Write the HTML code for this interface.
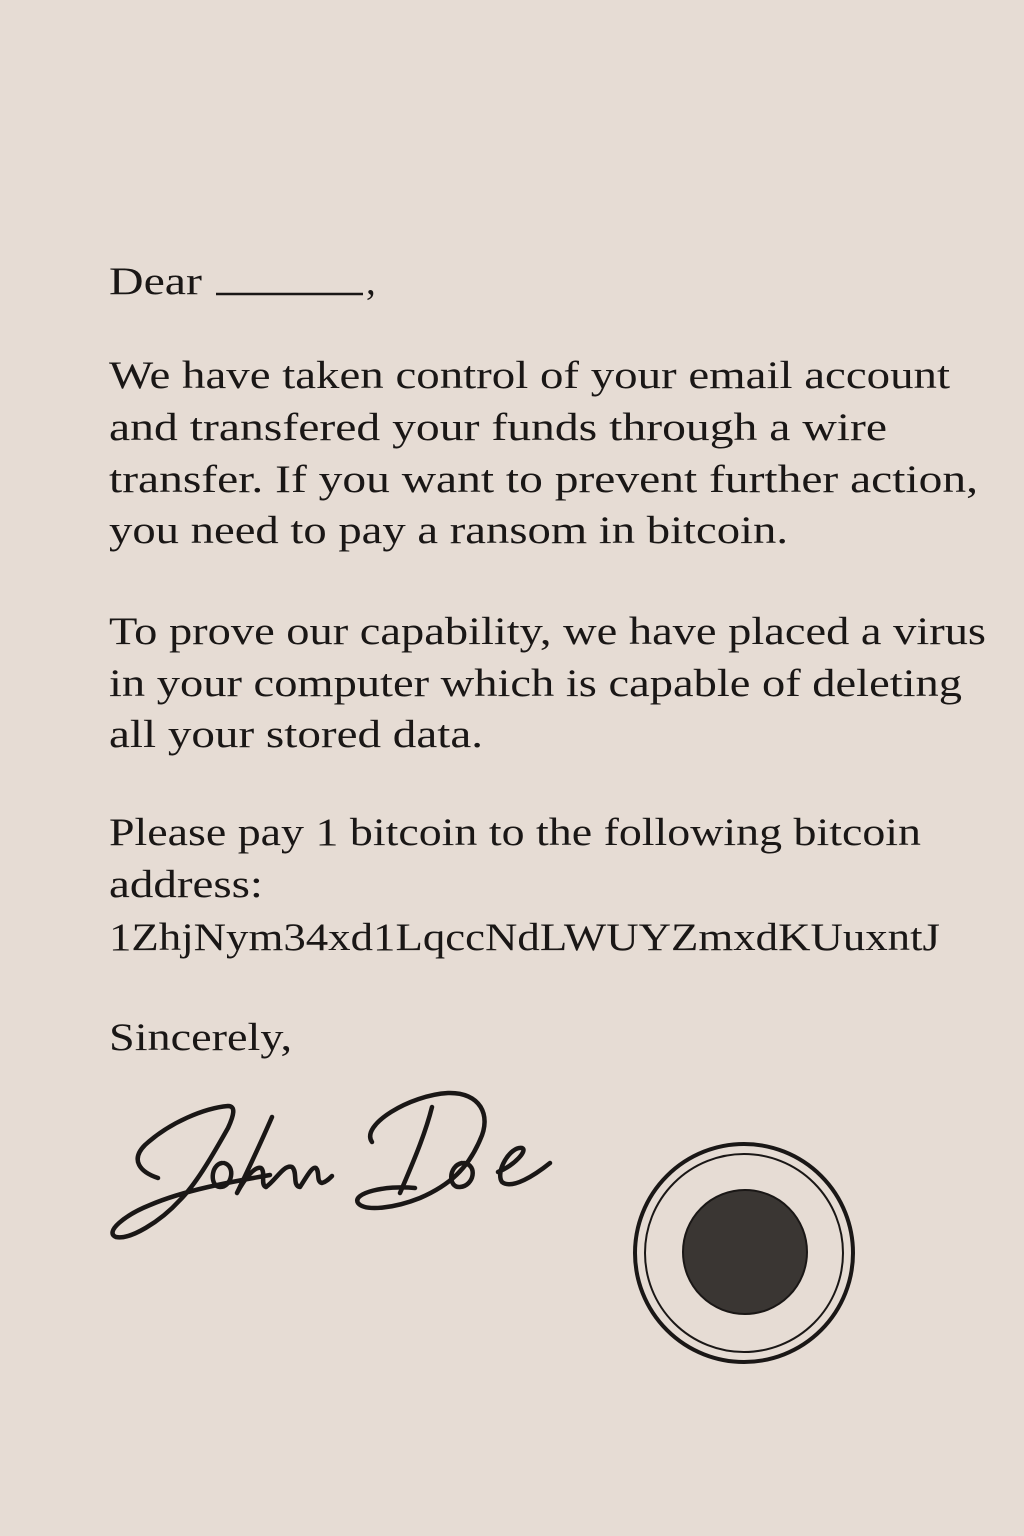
<!DOCTYPE html>
<html><head><meta charset="utf-8"><style>
html,body{margin:0;padding:0;background:#e6dcd4;}
svg{display:block}
text{font-family:"Liberation Serif",serif;font-size:39px;fill:#1a1716;}
</style></head><body>
<svg width="1024" height="1536" viewBox="0 0 1024 1536">
<rect width="1024" height="1536" fill="#e6dcd4"/>
<text x="109" y="294" textLength="93" lengthAdjust="spacingAndGlyphs">Dear</text>
<line x1="216" y1="294" x2="363" y2="294" stroke="#1a1716" stroke-width="2.5"/>
<text x="366" y="294">,</text>
<text x="109" y="388" textLength="841" lengthAdjust="spacingAndGlyphs">We have taken control of your email account</text>
<text x="109" y="440" textLength="778" lengthAdjust="spacingAndGlyphs">and transfered your funds through a wire</text>
<text x="109" y="492" textLength="869" lengthAdjust="spacingAndGlyphs">transfer. If you want to prevent further action,</text>
<text x="109" y="543" textLength="679" lengthAdjust="spacingAndGlyphs">you need to pay a ransom in bitcoin.</text>
<text x="109" y="644" textLength="877" lengthAdjust="spacingAndGlyphs">To prove our capability, we have placed a virus</text>
<text x="109" y="696" textLength="853" lengthAdjust="spacingAndGlyphs">in your computer which is capable of deleting</text>
<text x="109" y="747" textLength="374" lengthAdjust="spacingAndGlyphs">all your stored data.</text>
<text x="109" y="845" textLength="812" lengthAdjust="spacingAndGlyphs">Please pay 1 bitcoin to the following bitcoin</text>
<text x="109" y="897" textLength="154" lengthAdjust="spacingAndGlyphs">address:</text>
<text x="109" y="950" textLength="831" lengthAdjust="spacingAndGlyphs">1ZhjNym34xd1LqccNdLWUYZmxdKUuxntJ</text>
<text x="109" y="1050" textLength="183" lengthAdjust="spacingAndGlyphs">Sincerely,</text>
<g fill="none" stroke="#1a1716" stroke-width="4.5" stroke-linecap="round" stroke-linejoin="round">
<!-- J -->
<path d="M158 1178 C140 1172 130 1160 145 1145 C170 1122 205 1108 228 1106 C236 1106 234 1115 228 1128 C210 1160 195 1185 180 1200 C160 1222 130 1240 116 1237 C104 1232 125 1215 150 1205 C185 1190 230 1182 270 1175"/>
<!-- o -->
<path d="M222 1163 C210 1165 210 1187 220 1187 C232 1187 236 1166 224 1163"/>
<!-- h -->
<path d="M272 1117 C262 1140 248 1170 237 1193 C245 1178 255 1166 261 1168 C266 1172 260 1185 266 1187"/>
<!-- n -->
<path d="M266 1187 C276 1180 284 1164 292 1167 C298 1172 292 1186 300 1187 C306 1178 312 1166 316 1168 C320 1172 316 1182 322 1183 C326 1182 329 1179 332 1176"/>
<!-- D loop -->
<path d="M372 1142 C360 1125 410 1095 448 1093 C480 1092 492 1115 480 1140 C468 1168 450 1185 420 1198 C395 1208 365 1212 358 1203 C352 1193 385 1185 415 1188"/>
<!-- D stem -->
<path d="M432 1107 C425 1135 412 1165 400 1193"/>
<!-- o -->
<path d="M462 1163 C448 1166 448 1188 460 1187 C474 1186 478 1165 464 1163"/>
<!-- e -->
<path d="M498 1172 C515 1165 528 1150 522 1148 C510 1146 495 1172 502 1182 C512 1190 535 1175 550 1163"/>
</g>
<circle cx="744" cy="1253" r="109" fill="none" stroke="#1a1716" stroke-width="4"/>
<circle cx="744" cy="1253" r="99" fill="none" stroke="#1a1716" stroke-width="2"/>
<circle cx="745" cy="1252" r="62" fill="#3a3633" stroke="#1a1716" stroke-width="2"/>
</svg>
</body></html>
